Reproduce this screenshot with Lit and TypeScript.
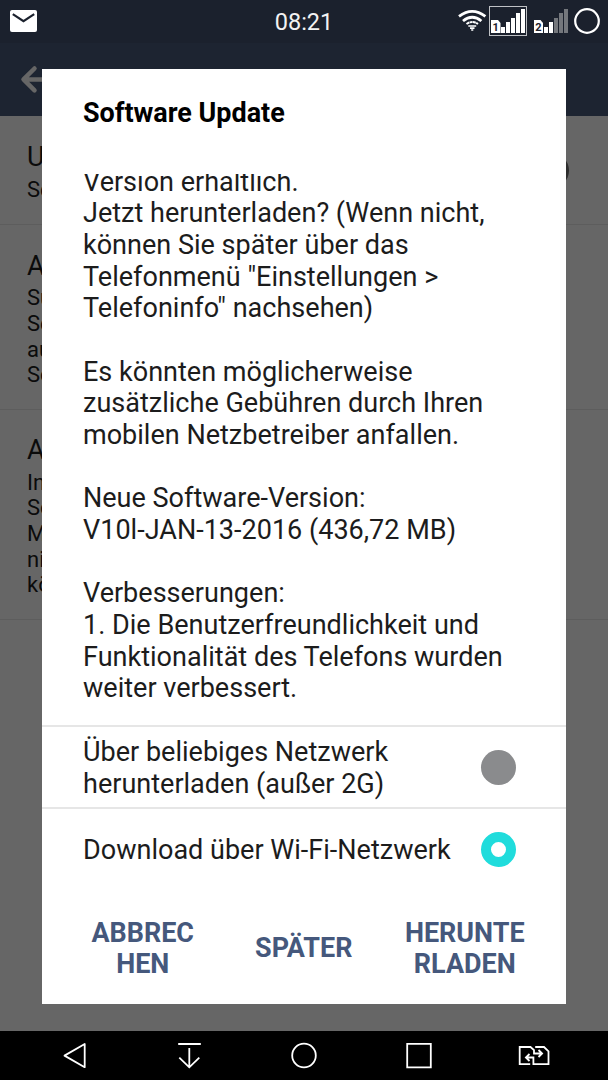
import { LitElement, html, css } from "lit";
import { customElement } from "lit/decorators.js";

const MESSAGE = `Version erhältlich.
Jetzt herunterladen? (Wenn nicht,
können Sie später über das
Telefonmenü "Einstellungen >
Telefoninfo" nachsehen)

Es könnten möglicherweise
zusätzliche Gebühren durch Ihren
mobilen Netzbetreiber anfallen.

Neue Software-Version:
V10l-JAN-13-2016 (436,72 MB)

Verbesserungen:
1. Die Benutzerfreundlichkeit und
Funktionalität des Telefons wurden
weiter verbessert.`;

const ROWS = [
  { size: "one", title: "U", lines: ["Se"] },
  { size: "four", title: "A", lines: ["Su", "Se", "au", "So"] },
  { size: "five", title: "A", lines: ["In", "So", "M", "ni", "kö"] },
];

@customElement("status-bar")
export class StatusBar extends LitElement {
  static styles = css`
    :host { display: grid; grid-template-columns: 1fr auto 1fr; align-items: center; height: 43px; background: #1b212d; color: #fff; }
    svg { display: block; }
    .right { justify-self: end; }
    .clock { font-size: 23.5px; line-height: 28px; padding-top: 1px; color: #f2f2f2; }
    .num { font: 700 11px Roboto, sans-serif; fill: #1b212d; }
  `;
  render() {
    return html`
      <svg width="60" height="43" viewBox="0 0 60 43">
        <rect x="10" y="10" width="27" height="22" rx="2" fill="#fff" />
        <path d="M12.8 14.2 23.5 21.2 34.2 14.2" fill="none" stroke="#1b212d" stroke-width="2.2" />
      </svg>
      <span class="clock">08:21</span>
      <svg class="right" width="154" height="43" viewBox="454 0 154 43">
        <g fill="none" stroke="#fff" stroke-width="2.8">
          <path d="M459 16.4Q472.2 6.4 485.4 16.4" />
          <path d="M463 21Q472.2 13.4 481.4 21" />
        </g>
        <path d="M466.5 24Q472.2 20 478 24" fill="none" stroke="#fff" stroke-width="2" stroke-dasharray="3 .4" />
        <path d="M468.3 26H476.2M470 28.2H474.5M471.2 30H473.3" fill="none" stroke="#fff" stroke-width="1.7" />
        <rect x="489.5" y="6.5" width="37" height="29" fill="none" stroke="#bfc1c5" />
        <g fill="#fff">
          <path d="M491 20h7l2.500 3v10H491z" />
          <path d="M501 27h4v6h-4zM506 22h4v11h-4zM511 18h4v15h-4zM516 13h4v20h-4zM521 9h4v24h-4z" />
          <path d="M534 20h6.500l2.500 3v10h-9z" />
          <path d="M544 27h4v6h-4zM549 22h4v11h-4z" />
        </g>
        <path d="M554 18h4v15h-4zM559 13h4v20h-4zM564 9h4v24h-4z" fill="#74777c" />
        <text class="num" x="492.5" y="31">1</text>
        <text class="num" x="535.2" y="31">2</text>
        <circle cx="587" cy="21" r="11.8" fill="none" stroke="#fff" stroke-width="2.2" />
      </svg>
    `;
  }
}

@customElement("settings-page")
export class SettingsPage extends LitElement {
  static styles = css`
    :host { display: flex; flex-direction: column; background: #666; color: #0b0b0b; overflow: hidden; }
    .bar { height: 73px; background: #1d2431; }
    svg { display: block; }
    .row { box-sizing: border-box; display: flex; justify-content: space-between; padding: 25.5px 39px 0 27px; border-bottom: 1px solid #5d5d5d; }
    .one { height: 109px; padding-top: 26px; }
    .four { height: 184.5px; }
    .five { height: 210px; }
    .title { font-size: 27px; line-height: 31.6px; margin-bottom: 3px; }
    .line { font-size: 22px; line-height: 25.7px; }
    .radio { width: 35px; height: 35px; border-radius: 50%; background: #2e2e2e; margin-top: 11px; }
  `;
  render() {
    return html`
      <div class="bar">
        <svg width="60" height="73" viewBox="0 43 60 73">
          <path d="M34.5 68.5 23.5 79.4 34.5 90.3M24 79.4H50" fill="none" stroke="#666" stroke-width="4.5" stroke-linecap="round" stroke-linejoin="round" />
        </svg>
      </div>
      ${ROWS.map(
        (row, i) => html`
          <div class="row ${row.size}">
            <div>
              <div class="title">${row.title}</div>
              ${row.lines.map((line) => html`<div class="line">${line}</div>`)}
            </div>
            ${i === 0 ? html`<div class="radio"></div>` : ""}
          </div>
        `
      )}
    `;
  }
}

@customElement("update-dialog")
export class UpdateDialog extends LitElement {
  static styles = css`
    :host { display: flex; flex-direction: column; background: #fff; color: #1c1c1c; font-size: 27.04px; line-height: 31.667px; }
    .title { height: 105px; box-sizing: border-box; padding: 29px 41px 0; color: #000; font-size: 26.95px; font-weight: 700; }
    .scroll { height: 551px; flex: none; overflow: hidden; display: flex; flex-direction: column; justify-content: flex-end; }
    .message { white-space: pre; padding: 0 41px 20px; }
    .option { box-sizing: border-box; display: flex; justify-content: space-between; align-items: center; padding: 0 50px 0 41px; height: 83px; border-top: 2px solid #e6e6e6; white-space: pre; }
    .option:nth-of-type(3) { height: 82px; }
    .option span { padding-top: 3px; }
    .radio { width: 35px; height: 35px; box-sizing: border-box; border-radius: 50%; background: #8a8b8d; }
    .on { background: #fff; border: 10.5px solid #20dcdc; }
    .actions { flex: 1; display: grid; grid-template-columns: repeat(3, 161px); justify-content: center; align-items: center; text-align: center; color: #45587c; font-size: 26.95px; font-weight: 700; line-height: 31px; white-space: pre; padding-top: 3px; }
  `;
  render() {
    return html`
      <div class="title">Software Update</div>
      <div class="scroll"><div class="message">${MESSAGE}</div></div>
      <div class="option"><span>${"Über beliebiges Netzwerk\nherunterladen (außer 2G)"}</span><i class="radio"></i></div>
      <div class="option"><span>Download über Wi-Fi-Netzwerk</span><i class="radio on"></i></div>
      <div class="actions"><span>${"ABBREC\nHEN"}</span><span>SPÄTER</span><span>${"HERUNTE\nRLADEN"}</span></div>
    `;
  }
}

@customElement("nav-bar")
export class NavBar extends LitElement {
  static styles = css`
    :host { display: flex; justify-content: center; align-items: center; height: 49px; background: #000; }
    .icon { flex: none; width: 115px; height: 49px; display: block; fill: none; stroke: #fff; stroke-width: 1.8; }
  `;
  render() {
    return html`
      <svg class="icon" viewBox="16.5 1031 115 49"><path d="M64 1055.6 84.2 1044V1067.2z" stroke-linejoin="round" /></svg>
      <svg class="icon" viewBox="131.5 1031 115 49"><path d="M177.700 1044H200.300M188.800 1048V1067M178.800 1057.700 188.800 1067.300 198.800 1057.700" /></svg>
      <svg class="icon" viewBox="246.5 1031 115 49"><circle cx="303.5" cy="1055.5" r="11.8" /></svg>
      <svg class="icon" viewBox="361.5 1031 115 49"><path d="M406.700 1043.800h23.600v23.600H406.700z" /></svg>
      <svg class="icon" viewBox="476.5 1031 115 49">
        <path d="M529.700 1064.200H519.200V1047H530L533.500 1050.200V1053.500H541.200M538 1050 541.600 1053.500 538 1057M534.700 1047H543.500L548 1051.300V1064.200H532.900V1057.500H525.700M529 1054 525.400 1057.500 529 1061" />
      </svg>
    `;
  }
}

@customElement("app-root")
export class AppRoot extends LitElement {
  static styles = css`
    :host { display: grid; grid-template-rows: 43px 988px 49px; width: 608px; height: 1080px; position: relative; overflow: hidden; font-family: Roboto, sans-serif; }
    .dialog { position: absolute; left: 42px; top: 69px; width: 523.5px; height: 935px; }
  `;
  render() {
    return html`
      <status-bar></status-bar>
      <settings-page></settings-page>
      <nav-bar></nav-bar>
      <update-dialog class="dialog"></update-dialog>
    `;
  }
}
